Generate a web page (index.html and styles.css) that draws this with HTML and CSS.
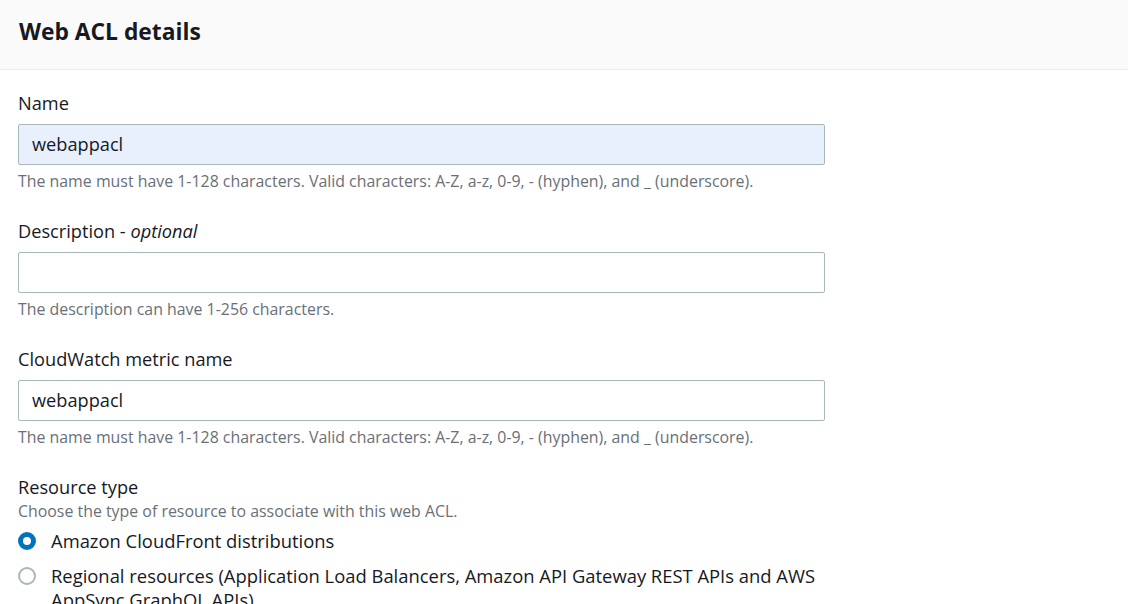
FILE: index.html
```html
<!DOCTYPE html>
<html lang="en">
<head>
<meta charset="utf-8">
<title>Web ACL details</title>
<link rel="stylesheet" href="styles.css">
</head>
<body>
<div class="panel">
  <div class="panel-header">
    <h2 class="panel-title">Web ACL details</h2>
  </div>
  <div class="panel-body">
    <div class="field">
      <label class="field-label">Name</label>
      <div class="input autofilled">webappacl</div>
      <div class="field-hint">The name must have 1-128 characters. Valid characters: A-Z, a-z, 0-9, - (hyphen), and _ (underscore).</div>
    </div>
    <div class="field">
      <label class="field-label">Description - <i>optional</i></label>
      <div class="input"></div>
      <div class="field-hint">The description can have 1-256 characters.</div>
    </div>
    <div class="field">
      <label class="field-label">CloudWatch metric name</label>
      <div class="input">webappacl</div>
      <div class="field-hint">The name must have 1-128 characters. Valid characters: A-Z, a-z, 0-9, - (hyphen), and _ (underscore).</div>
    </div>
    <div class="field">
      <label class="field-label">Resource type</label>
      <div class="field-desc">Choose the type of resource to associate with this web ACL.</div>
      <div class="radio-group">
        <div class="radio-row">
          <span class="radio checked"></span>
          <span class="radio-text">Amazon CloudFront distributions</span>
        </div>
        <div class="radio-row">
          <span class="radio"></span>
          <span class="radio-text">Regional resources (Application Load Balancers, Amazon API Gateway REST APIs and AWS AppSync GraphQL APIs)</span>
        </div>
      </div>
    </div>
  </div>
</div>
</body>
</html>
```

FILE: styles.css
```css
* { box-sizing: border-box; }
html, body { margin: 0; padding: 0; background: #ffffff; }
body {
  font-family: "Open Sans", "Noto Sans", Arial, sans-serif;
  color: #16191f;
}
.panel-header {
  background: #fafafa;
  border-bottom: 1px solid #eaeded;
  height: 70px;
  padding: 17px 19px 0;
}
.panel-title {
  margin: 0;
  font-size: 22.8px;
  line-height: 30px;
  font-weight: 700;
  color: #16191f;
}
.panel-body {
  padding: 21px 18px 0;
  width: 843px;
}
.field { margin-bottom: 28px; }
.field-label {
  display: block;
  font-size: 18.2px;
  line-height: 24px;
  margin-bottom: 9px;
}
.field-label i { font-style: italic; }
.input {
  height: 41px;
  border: 1px solid #aab7b8;
  border-radius: 2px;
  background: #ffffff;
  padding: 0 13px;
  font-size: 18.2px;
  line-height: 39px;
}
.input.autofilled { background: #e8f0fe; }
.field-hint {
  margin-top: 6px;
  font-size: 15.9px;
  line-height: 20px;
  color: #687078;
}
.field .field-label + .field-desc { margin-top: -7px; }
.field-desc {
  font-size: 15.9px;
  line-height: 20px;
  color: #687078;
}
.radio-group {
  margin-top: 8px;
  display: flex;
  flex-direction: column;
  gap: 11px;
}
.radio-row {
  display: flex;
  align-items: flex-start;
  gap: 15px;
}
.radio {
  flex: 0 0 auto;
  width: 18px;
  height: 18px;
  margin-top: 3px;
  border-radius: 50%;
  border: 2px solid #aab7b8;
  background: #ffffff;
}
.radio.checked {
  border: 5px solid #0073bb;
}
.radio-text {
  font-size: 18.4px;
  line-height: 24px;
}
```
